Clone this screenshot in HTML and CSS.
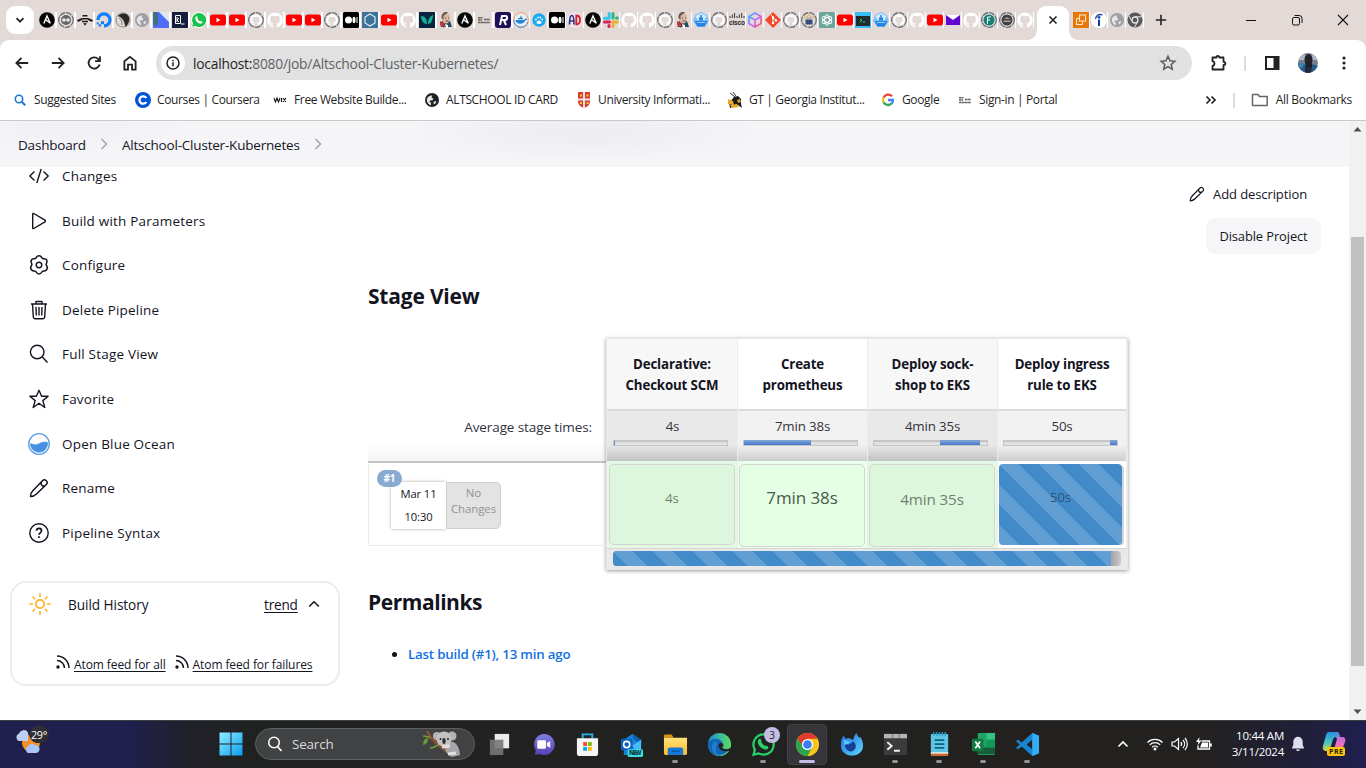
FILE: index.html
```html
<!DOCTYPE html>
<html lang="en">
<head>
<meta charset="utf-8">
<title>Altschool-Cluster-Kubernetes [Jenkins]</title>
<link rel="stylesheet" href="styles.css">
</head>
<body>
<svg class="defs" width="0" height="0">
  <defs>
    <linearGradient id="gWin" x1="0" y1="0" x2="1" y2="1"><stop offset="0" stop-color="#8ff0ff"/><stop offset="1" stop-color="#0a9bf0"/></linearGradient>
    <linearGradient id="gCube" x1="0" y1="0" x2="1" y2="1"><stop offset="0" stop-color="#19c3ff"/><stop offset=".5" stop-color="#c46bff"/><stop offset="1" stop-color="#ff5a5a"/></linearGradient>
    <linearGradient id="gChat" x1="0" y1="0" x2="0" y2="1"><stop offset="0" stop-color="#7d7fe8"/><stop offset="1" stop-color="#5b3fb0"/></linearGradient>
    <linearGradient id="gEdge" x1="0" y1="0" x2="1" y2="0"><stop offset="0" stop-color="#1b8fdc"/><stop offset="1" stop-color="#5bdc60"/></linearGradient>
    <linearGradient id="gFox" x1="0" y1="0" x2="1" y2="1"><stop offset="0" stop-color="#1d6fe0"/><stop offset="1" stop-color="#5fd6ff"/></linearGradient>
    <linearGradient id="gFold" x1="0" y1="0" x2="0" y2="1"><stop offset="0" stop-color="#ffe07a"/><stop offset="1" stop-color="#fbbc2c"/></linearGradient>
    <linearGradient id="gCopL" x1="0" y1="0" x2="0" y2="1"><stop offset="0" stop-color="#2a8fe0"/><stop offset=".5" stop-color="#3fc0c8"/><stop offset="1" stop-color="#c8e04a"/></linearGradient>
    <linearGradient id="gCopR" x1="0" y1="0" x2="0" y2="1"><stop offset="0" stop-color="#9a6cf0"/><stop offset=".6" stop-color="#ee6fc0"/><stop offset="1" stop-color="#ff9a62"/></linearGradient>
  </defs>
  <symbol id="ansible" viewBox="0 0 16 16"><circle cx="8" cy="8" r="7.800" fill="#050505"/><path d="M4.800 11.600 8 4l3.300 7.200-4.500-3.500" fill="none" stroke="#fff" stroke-width="1.400"/></symbol>
  <symbol id="ring" viewBox="0 0 16 16"><circle cx="8" cy="8" r="7.300" fill="none" stroke="#6b7078" stroke-width="1.300" stroke-dasharray="6 .8"/></symbol>
  <symbol id="gh" viewBox="0 0 16 16"><path fill="#fff" d="M8 .5C3.700.5.300 4 .300 8.200c0 3.400 2.200 6.200 5.300 7.200.4.100.5-.2.500-.4v-1.400c-2.100.5-2.600-.9-2.600-.9-.4-.9-.9-1.100-.9-1.100-.7-.5.100-.5.100-.5.800.100 1.200.8 1.200.8.700 1.200 1.800.9 2.200.7.100-.5.300-.9.500-1.100-1.700-.2-3.500-.9-3.500-3.800 0-.8.300-1.500.8-2.100-.1-.2-.4-1 .1-2 0 0 .6-.2 2.100.8a7.300 7.300 0 0 1 3.900 0c1.500-1 2.100-.8 2.100-.8.500 1 .2 1.800.1 2 .5.600.8 1.300.8 2.100 0 2.900-1.800 3.600-3.500 3.800.3.200.5.700.5 1.400v2.100c0 .2.100.5.500.4a7.700 7.700 0 0 0 5.300-7.200C15.700 4 12.300.5 8 .5z"/><path fill="#e3dad7" d="M5 4.400c1-.3 5-.3 6 0 1.300 1.500 1.200 5.200-1.700 5.800H6.700C3.800 9.600 3.700 5.900 5 4.400z"/></symbol>
  <symbol id="ghr" viewBox="0 0 16 16"><use href="#gh" x="2" y="2" width="12" height="12"/><use href="#ring" width="16" height="16"/></symbol>
  <symbol id="eyes" viewBox="0 0 16 16"><use href="#ring" width="16" height="16"/><circle cx="8" cy="8" r="5" fill="#666"/><circle cx="6" cy="8" r="1.800" fill="#eee"/><circle cx="10" cy="8" r="1.800" fill="#eee"/></symbol>
  <symbol id="bee" viewBox="0 0 16 16"><path d="M0 8l5-2v2L1 10zM16 8l-5-2v2l4 2zM5.500 3h5v1.500h-5zM5 6h6v1.500H5zM5 8.700h6v1.500H5zM6 11.300h4L8 13.500z" fill="#1c1c1c"/></symbol>
  <symbol id="docean" viewBox="0 0 16 16"><path d="M8 15.500v-3.200A4.400 4.400 0 1 0 3.600 8H.4A7.600 7.600 0 1 1 8 15.500zM4.900 9.300H8v3H4.900zM2.600 12.200h2.300v2.300H2.600zM.7 10.300h1.900v1.900H.7z" fill="#0a80ff"/></symbol>
  <symbol id="bird" viewBox="0 0 16 16"><circle cx="8" cy="8" r="7" fill="none" stroke="#8c8880"/><path d="M3 4c2-3 9-4 11 1 1 4-1 7-3 10-2-2-1-5-3-7-1-2-3-3-5-4z" fill="#2a2827"/><path d="M4 6c2 1 3 3 3 7" stroke="#777" fill="none"/></symbol>
  <symbol id="globe" viewBox="0 0 16 16"><circle cx="8" cy="8" r="7" fill="currentColor"/><path d="M2.800 7.500c.5-3 3-4.200 5.500-4l-.8 2 2 1.200-1 1.600-2.200.2-1 1.500 1.700.6v2.600c-2.500-.5-4.300-2.700-4.200-5.700zM9.500 9.800l2.700-.8-.5 2.200-1.900 1.300z" fill="#e9e5e4"/></symbol>
  <symbol id="tri" viewBox="0 0 16 16"><path d="M0 0h16v16H0z" fill="#506dff"/><path d="M0 0h16v10L6 0z" fill="#dfe9ee"/><path d="M0 0h4l3 8-4 7-3-4z" fill="#3d7080"/><path d="M5 2l11 11H5z" fill="#4f6dfa"/></symbol>
  <symbol id="kl" viewBox="0 0 16 16"><path d="M0 0h16v16H0z" fill="#161d3d"/><path d="M3.500 3.500h5v8h-5zM5 5v5M5 8l2-2M5 8l2 2M9 12h3.500" fill="none" stroke="#fff"/></symbol>
  <symbol id="wa" viewBox="0 0 16 16"><path d="M8 0a8 8 0 0 0-6.900 12L.2 15.800 4 14.900A8 8 0 1 0 8 0z" fill="#fff"/><path d="M8 1a7 7 0 0 0-6 10.500l-.8 3.200 3.300-.8A7 7 0 1 0 8 1z" fill="#18c24c"/><path d="M5.500 4.300c1-.4 1.200 1.400 1 2.100.4 1.300 1.500 2.300 2.800 2.900.6-.4 2 0 2.200.8.100 1.300-1.500 2-3 1.500C6 10.800 4.400 8.500 4.300 6.300c0-.8.400-1.600 1.200-2z" fill="#fff"/></symbol>
  <symbol id="yt" viewBox="0 0 16 16"><rect y="2.500" width="16" height="11" rx="2.800" fill="#f00"/><path d="M6.500 5.700v4.600L10.500 8z" fill="#fff"/></symbol>
  <symbol id="medium" viewBox="0 0 16 16"><rect width="16" height="16" rx="1.500" fill="#000"/><circle cx="5.500" cy="8" r="3.500" fill="#fff"/><ellipse cx="11" cy="8" rx="1.500" ry="3.200" fill="#fff"/><path d="M14 5v6" stroke="#fff"/></symbol>
  <symbol id="hex" viewBox="0 0 16 16"><path d="M0 0h16v16H0z" fill="#3e7396"/><path d="M8 2l5 3v6l-5 3-5-3V5z" fill="none" stroke="#d9eefb" stroke-width="1.200"/></symbol>
  <symbol id="leaf" viewBox="0 0 16 16"><path d="M0 0h16v16H0z" fill="#0a2440"/><path d="M2 4c4 0 6 3 6 8-4 0-6-4-6-8zM14 3c0 5-2 9-5 9 0-5 2-8 5-9z" fill="#12b39c"/></symbol>
  <symbol id="jenk" viewBox="0 0 16 16"><path d="M2.500 15l1.500-6h8l2 6z" fill="#2f4a5c"/><ellipse cx="8" cy="6" rx="4.200" ry="5.500" fill="#dbb9a4"/><path d="M3.500 6C3 1 7-1 10 .5L8 2 5.500 4v4z" fill="#6a5a52"/><path d="M2 9l4 2v5l-4-3z" fill="#c23a36"/><path d="M7 12l3 1v3H8z" fill="#fff"/><path d="M7 6h1m2 0h1M7.500 9h3" stroke="#6b4a3e"/></symbol>
  <symbol id="alt" viewBox="0 0 16 16"><path d="M2 5.700h4.500M2 8h4M2 10.500h12M8 7.500h6" stroke="#66605e" stroke-width="1.400" stroke-dasharray="2.500 .3"/></symbol>
  <symbol id="rr" viewBox="0 0 16 16"><rect width="16" height="16" rx="3" fill="#1d1056"/><path d="M5 13L7 4h3.500c2.500 0 2 4-.6 4H6.500M8.800 8l2.200 5" stroke="#fff" stroke-width="2" fill="none"/></symbol>
  <symbol id="docker" viewBox="0 0 16 16"><circle cx="8" cy="8" r="7.300" fill="#e9eef1" stroke="#f39b62"/><path d="M.7 8A7.300 7.300 0 0 0 15 10" stroke="#3b8fe2" fill="none"/><path d="M2.500 8h8.500c.8 0 .8-1.600 1.600-1.600s.9.700 1.700.7c-.8 1.600-1.600 1.300-2.400 1.600-1 4-9 4.300-9.400-.7zM5 6h5v1.300H5zM7 4.500h2v1.200H7z" fill="#1f86d6"/></symbol>
  <symbol id="paw" viewBox="0 0 16 16"><circle cx="8" cy="8" r="6.700" fill="#18a8f5"/><path d="M5.500 11c0-3.500 5-3.500 5 0-1 1.200-4 1.200-5 0z" fill="#fff"/><circle cx="5" cy="7.500" r=".9" fill="#fff"/><circle cx="7" cy="5.500" r=".9" fill="#fff"/><circle cx="9.300" cy="5.500" r=".9" fill="#fff"/><circle cx="11.200" cy="7.500" r=".9" fill="#fff"/></symbol>
  <symbol id="ad" viewBox="0 0 16 16"><circle cx="8" cy="8" r="7.700" fill="#f1e6ee"/><path d="M2.500 12.500c0-5 .8-9 2.500-9s2 4 2 9M3 9h4" stroke="#27348f" stroke-width="1.700" fill="none"/><path d="M9.300 3.500v9c5 0 5-9 0-9z" fill="none" stroke="#d8262f" stroke-width="1.900"/></symbol>
  <symbol id="slack" viewBox="0 0 16 16"><path d="M6.200 1.500v4.800" stroke="#36c5f0" stroke-width="3" stroke-linecap="round"/><path d="M1.500 6.300h3" stroke="#36c5f0" stroke-width="3" stroke-linecap="round"/><path d="M10 1.500v4.500M14.500 6h-1" stroke="#2eb67d" stroke-width="3" stroke-linecap="round"/><path d="M1.500 10h5M6 14.500v-1" stroke="#e01e5a" stroke-width="3" stroke-linecap="round"/><path d="M10 14.500V10h4.500" stroke="#ecb22e" stroke-width="3" stroke-linecap="round" fill="none"/></symbol>
  <symbol id="ship" viewBox="0 0 16 16"><path d="M8 0l6 3 1.800 6-4 6H4.200L.2 9 2 3z" fill="#7cc0f5"/><path d="M2.500 4L8 1.200 13.500 4l-2 4h-7z" fill="#d4ecfd"/><path d="M1.500 9h13l-3 5.500h-7zM6 5.500h4v3H6zM7.300 3h1.500v3H7.300z" fill="#2583e6"/><path d="M4 10.500h8" stroke="#8fd0ff"/></symbol>
  <symbol id="cube" viewBox="0 0 16 16"><path d="M8 1l6 3.500v7L8 15l-6-3.500v-7zM2 4.500L8 8l6-3.500M8 8v7" fill="none" stroke="url(#gCube)" stroke-width="1.700"/></symbol>
  <symbol id="git" viewBox="0 0 16 16"><path d="M8 0l8 8-8 8-8-8z" fill="#f0472b"/><path d="M6 3l2 2v6M8 6l3 2.500" stroke="#fff" fill="none"/><circle cx="8" cy="11" r="1.200" fill="#fff"/><circle cx="11" cy="8.500" r="1.200" fill="#fff"/><circle cx="8" cy="5.500" r="1.200" fill="#fff"/></symbol>
  <symbol id="lock" viewBox="0 0 16 16"><use href="#ring" width="16" height="16"/><path d="M3 6l5-3 5 3" stroke="#eda637" stroke-width="1.500" stroke-dasharray="1.500 1" fill="none"/><rect x="4.500" y="7.500" width="7" height="5" fill="#344c79"/><path d="M6 7.500V6h4v1.500" stroke="#8795ad" fill="none"/></symbol>
  <symbol id="gpt" viewBox="0 0 16 16"><rect width="16" height="16" rx="1.500" fill="#6ba799"/><g fill="none" stroke="#fff" stroke-width=".9"><ellipse cx="8" cy="8" rx="2.300" ry="5.300"/><ellipse cx="8" cy="8" rx="2.300" ry="5.300" transform="rotate(60 8 8)"/><ellipse cx="8" cy="8" rx="2.300" ry="5.300" transform="rotate(120 8 8)"/></g></symbol>
  <symbol id="term" viewBox="0 0 16 16"><path d="M0 0h16v16H0z" fill="#37bdf4"/><path d="M1 4h14v10H1z" fill="#222c30"/><path d="M5 7l2 1.500L5 10M8 10h2" stroke="#35df75" fill="none"/></symbol>
  <symbol id="mail" viewBox="0 0 16 16"><path d="M1 3h14v10H1z" fill="#5f06cf"/><path d="M1 3h14L8 8z" fill="#fff"/></symbol>
  <symbol id="fring" viewBox="0 0 16 16"><use href="#ring" width="16" height="16"/><circle cx="8" cy="8" r="5.500" fill="#168077"/><path d="M6.500 12V5H10M6.500 8H9" stroke="#fff" fill="none"/></symbol>
  <symbol id="dring" viewBox="0 0 16 16"><use href="#ring" width="16" height="16"/><circle cx="8" cy="8" r="5.500" fill="#3e4146"/><path d="M4.500 7L8 5.300 11.500 7zM4.500 8.500h7V10h-7z" fill="#b9a18d"/></symbol>
  <symbol id="aws" viewBox="0 0 16 16"><path d="M0 0h16v16H0z" fill="#e87909"/><path d="M6.500 3h6v6h-6zM3.500 6.500v6h6M3.500 6.500h3M9.500 9v3.500" fill="none" stroke="#ffe7cf" stroke-width="1.100"/></symbol>
  <symbol id="indeed" viewBox="0 0 16 16"><circle cx="8" cy="8" r="8" fill="#fff"/><circle cx="8" cy="5.300" r="1.400" fill="#1146b5"/><path d="M8 7.500V14" stroke="#123f9f" stroke-width="2"/><path d="M4.500 7c.5-3.500 3.500-5.500 7-4" stroke="#123f9f" stroke-width="1.300" fill="none"/></symbol>
  <symbol id="chromeg" viewBox="0 0 16 16"><circle cx="8" cy="8" r="7.500" fill="#55585c"/><circle cx="8" cy="8" r="3" fill="#55585c" stroke="#e9e5e4" stroke-width="1.300"/><path d="M8 4.800h7M5.200 9.500L2 4M10.800 9.500l-3.500 6" stroke="#e9e5e4"/></symbol>
  <symbol id="pencil" viewBox="0 0 20 20"><path d="M1.500 18.500c0-2.500 1-4.500 2.500-6L13.500 2.700a2.600 2.600 0 0 1 3.800 3.800L7.500 16c-1.500 1.500-3.500 2.500-6 2.500zM12.800 3.400a2.600 2.600 0 0 0 3.800 3.800" fill="none" stroke="currentColor" stroke-width="1.500" stroke-linejoin="round"/></symbol>
  <symbol id="rss" viewBox="0 0 14 14"><circle cx="2" cy="12" r="1.700" fill="currentColor"/><path d="M1 5.500A7.500 7.500 0 0 1 8.500 13M1 1a12 12 0 0 1 12 12" fill="none" stroke="currentColor" stroke-width="1.500"/></symbol>
</svg>

<header class="browser">
  <div class="tabstrip">
    <button class="tabsearch"><svg width="10" height="10" viewBox="0 0 10 10"><path d="M1.500 3.200L5 6.700l3.500-3.500" fill="none" stroke="#222" stroke-width="1.700"/></svg></button>
    <div class="tabs wide">
      <svg><use href="#ansible"/></svg><svg><use href="#eyes"/></svg><svg><use href="#bee"/></svg><svg><use href="#docean"/></svg><svg><use href="#bird"/></svg><svg class="grey"><use href="#globe"/></svg><svg><use href="#tri"/></svg><svg><use href="#kl"/></svg><svg><use href="#wa"/></svg><svg><use href="#yt"/></svg><svg><use href="#yt"/></svg><svg><use href="#ghr"/></svg><svg><use href="#gh"/></svg><svg><use href="#yt"/></svg><svg><use href="#yt"/></svg><svg><use href="#ghr"/></svg><svg><use href="#medium"/></svg><svg><use href="#hex"/></svg><svg><use href="#yt"/></svg><svg><use href="#gh"/></svg><svg><use href="#leaf"/></svg><svg><use href="#jenk"/></svg><svg><use href="#ansible"/></svg><svg><use href="#alt"/></svg><svg><use href="#rr"/></svg>
    </div>
    <div class="tabs">
      <svg><use href="#docker"/></svg><svg><use href="#paw"/></svg><svg><use href="#medium"/></svg><svg><use href="#ad"/></svg><svg><use href="#ansible"/></svg><svg><use href="#slack"/></svg><svg><use href="#gh"/></svg><svg><use href="#gh"/></svg><svg><use href="#ghr"/></svg><svg><use href="#jenk"/></svg><svg><use href="#ship"/></svg><svg><use href="#ghr"/></svg><svg viewBox="0 0 16 16"><path d="M1 4v2M3.300 2.500V6M5.600 1v5M8 4v2M10.300 2.500V6M12.700 1v5M15 4v2" stroke="#333"/><text x="0" y="12.500" font-family="Liberation Sans" font-weight="700" font-size="6.500" textLength="16" fill="#222">cisco</text></svg><svg><use href="#cube"/></svg><svg><use href="#git"/></svg><svg><use href="#ghr"/></svg><svg><use href="#lock"/></svg><svg><use href="#gpt"/></svg><svg><use href="#yt"/></svg><svg><use href="#term"/></svg><svg><use href="#ship"/></svg><svg><use href="#ghr"/></svg><svg><use href="#gh"/></svg><svg><use href="#yt"/></svg><svg><use href="#mail"/></svg><svg><use href="#gh"/></svg><svg><use href="#fring"/></svg><svg><use href="#dring"/></svg><svg><use href="#gh"/></svg>
    </div>
    <div class="tab-active"><svg width="10" height="10" viewBox="0 0 10 10"><path d="M1.500 1.500l7 7m0-7l-7 7" stroke="#222" stroke-width="1.600"/></svg></div>
    <div class="tabs last"><svg><use href="#aws"/></svg><svg><use href="#indeed"/></svg><svg class="grey"><use href="#globe"/></svg><svg><use href="#chromeg"/></svg></div>
    <svg class="plus" width="12" height="12" viewBox="0 0 12 12"><path d="M6 .8v10.400M.8 6h10.400" stroke="#222" stroke-width="1.600"/></svg>
    <div class="winbtns">
      <svg width="12" height="12" viewBox="0 0 12 12"><path d="M1 6.500h10" stroke="#111"/></svg>
      <svg width="12" height="12" viewBox="0 0 12 12"><path d="M3.500 1.500H8a3 3 0 0 1 3 3V9" fill="none" stroke="#111"/><rect x="1.500" y="3.500" width="7" height="7.500" rx="1.500" fill="none" stroke="#111"/></svg>
      <svg width="12" height="12" viewBox="0 0 12 12"><path d="M1 1l10 10M11 1L1 11" stroke="#111" stroke-width="1.100"/></svg>
    </div>
  </div>
  <div class="toolbar">
    <div class="nav">
      <svg viewBox="0 0 16 16"><path d="M13.500 8H3M7.500 3.500L3 8l4.500 4.500" /></svg>
      <svg viewBox="0 0 16 16"><path d="M2.500 8H13M8.500 3.500L13 8l-4.500 4.500"/></svg>
      <svg viewBox="0 0 16 16"><path d="M13 9.300A5 5 0 1 1 11.800 4.500l1.500 1.500M13.300 2v4.300H9"/></svg>
      <svg viewBox="0 0 16 16"><path d="M3 6.500L8 2.500l5 4v7.300H9.800V9.500H6.200v4.300H3z"/></svg>
    </div>
    <div class="omnibox">
      <span class="info"><svg width="14" height="14" viewBox="0 0 14 14"><circle cx="7" cy="7" r="6" fill="none" stroke="#222" stroke-width="1.500"/><path d="M7 6.300v3.900M7 3.700v1.500" stroke="#222" stroke-width="1.500"/></svg></span>
      <span class="url"><b>localhost:</b>8080/job/Altschool-Cluster-Kubernetes/</span>
      <svg class="fav" width="18" height="18" viewBox="0 0 18 18"><path d="M9 2.200l2 4.500 4.900.5-3.700 3.200 1.100 4.800L9 12.700l-4.300 2.500 1.100-4.800-3.700-3.200 4.900-.5z" fill="none" stroke="#5c5c5c" stroke-width="1.500"/></svg>
    </div>
    <svg class="puzzle" width="20" height="20" viewBox="0 0 20 20"><path d="M3.500 4.500h4c0-2.300 2.800-2.300 2.800 0H14.500v4.300c2.500 0 2.500 3.200 0 3.200v4.500h-11v-3.500c2.600-.5 2.600-4.300 0-4.800z" fill="none" stroke="#222" stroke-width="1.800" stroke-linejoin="round"/></svg>
    <i class="vsep"></i>
    <svg class="panel" width="16" height="16" viewBox="0 0 16 16"><rect x="2" y="2" width="12.500" height="12" fill="none" stroke="#222" stroke-width="2"/><path d="M9.500 2h5v12h-5z" fill="#222"/></svg>
    <svg class="avatar" width="20" height="20" viewBox="0 0 20 20"><defs><clipPath id="av"><circle cx="10" cy="10" r="10"/></clipPath></defs><g clip-path="url(#av)"><path d="M0 0h20v20H0z" fill="#777f91"/><path d="M0 2h20v5H0z" fill="#b4b7c4"/><path d="M0 10l6 1 3 3 5-3 6 2v7H0z" fill="#245b86"/><path d="M2 9l4 2-2 4-4-1z" fill="#3f86b5"/><path d="M7 9h7v6H8z" fill="#1a2030"/><ellipse cx="10.500" cy="6.500" rx="4" ry="5.500" fill="#23232c"/><path d="M7 13l3 3 4-3-1 7H7z" fill="#23283b"/></g></svg>
    <svg class="dots" width="4" height="16" viewBox="0 0 4 16"><g fill="#222"><circle cx="2" cy="3" r="1.600"/><circle cx="2" cy="8" r="1.600"/><circle cx="2" cy="13" r="1.600"/></g></svg>
  </div>
  <div class="bookmarks">
    <div class="bm-list">
      <a><svg viewBox="0 0 16 16"><circle cx="7" cy="7" r="3.700" fill="none" stroke="#1c78cf" stroke-width="1.600"/><path d="M9.700 9.700l3.500 3.500" stroke="#1c78cf" stroke-width="2"/></svg><span>Suggested Sites</span></a>
      <a><svg viewBox="0 0 16 16"><circle cx="8" cy="8" r="8" fill="#0056d6"/><path d="M11.300 6A3.700 3.700 0 1 0 11.300 10" fill="none" stroke="#fff" stroke-width="2.300"/></svg><span>Courses | Coursera</span></a>
      <a><svg viewBox="0 0 16 16"><path d="M2 6l1.500 4L5 6l1.500 4L8 6M9.500 6v4M11 6l3 4M14 6l-3 4" fill="none" stroke="#111" stroke-width="1.100"/></svg><span>Free Website Builde...</span></a>
      <a class="dark"><svg viewBox="0 0 16 16"><use href="#globe"/></svg><span>ALTSCHOOL ID CARD</span></a>
      <a><svg viewBox="0 0 16 16"><path d="M2 0h12v9c0 4-3 6-6 7-3-1-6-3-6-7z" fill="#da3d32"/><path d="M8 0v16M2 7.500h12" stroke="#e8e3e1" stroke-width="2"/><path d="M4 2.500h2v2H4zM10.500 2.500h2v2h-2zM4 10h2v2H4zM10.500 10h2v2h-2z" fill="#ffc629"/></svg><span>University Informati...</span></a>
      <a><svg viewBox="0 0 16 16"><path d="M3 1l5 4M6 0l3 4" stroke="#333" fill="none"/><path d="M7 5l4-1 3 3v5l1 4-4-3-8 3-1-5z" fill="#1c1b18"/><path d="M1 7l5 2 1 4-6-1zM3 13l7-1 2 3-7 1z" fill="#e9a928"/><path d="M10 8l3-1 1 3-3 1z" fill="#d9a032"/></svg><span>GT | Georgia Institut...</span></a>
      <a><svg viewBox="0 0 16 16"><g fill="none" stroke-width="2.300"><path d="M12 4.300A5 5 0 0 0 3.600 5.600" stroke="#ea4335"/><path d="M3.600 5.600a5 5 0 0 0 0 4.800" stroke="#fbbc05"/><path d="M3.600 10.400A5 5 0 0 0 11.300 11.700" stroke="#34a853"/><path d="M11.300 11.700A5 5 0 0 0 13 8H8" stroke="#4285f4"/></g></svg><span>Google</span></a>
      <a><svg viewBox="0 0 16 16"><use href="#alt"/></svg><span>Sign-in | Portal</span></a>
    </div>
    <svg class="more" width="12" height="10" viewBox="0 0 12 10"><path d="M1.500 1.500L5 5 1.500 8.500M6.500 1.500L10 5 6.500 8.500" fill="none" stroke="#222" stroke-width="1.700"/></svg>
    <i class="vsep"></i>
    <svg class="folder" width="18" height="14" viewBox="0 0 18 14"><path d="M1.500 1.500H7l1.500 2h7.700v9H1.500z" fill="none" stroke="#666" stroke-width="1.500" stroke-linejoin="round"/></svg>
    <span class="all">All Bookmarks</span>
  </div>
</header>

<div class="viewport">
  <div class="page">
    <nav class="crumbs">
      <span class="c1">Dashboard</span>
      <svg width="8" height="12" viewBox="0 0 8 12"><path d="M1.500 1l5 5-5 5" fill="none" stroke="#9a9aae" stroke-width="1.300"/></svg>
      <span class="c2">Altschool-Cluster-Kubernetes</span>
      <svg width="8" height="12" viewBox="0 0 8 12"><path d="M1.500 1l5 5-5 5" fill="none" stroke="#9a9aae" stroke-width="1.300"/></svg>
    </nav>
    <div class="columns">
      <aside class="side">
        <a><svg viewBox="0 0 20 20"><path d="M5.500 5.500L.8 10l4.700 4.500M14.500 5.500l4.700 4.500-4.700 4.500M12.200 3L7.800 17"/></svg><span>Changes</span></a>
        <a><svg viewBox="0 0 20 20"><path d="M3.700 3v14c0 .5.500.8 1 .5L16 10.800c.6-.4.600-1.200 0-1.600L4.700 2.500c-.5-.3-1 0-1 .5z"/></svg><span>Build with Parameters</span></a>
        <a><svg viewBox="0 0 20 20"><path d="M7.600 2.200C8.600.3 11.400.3 12.400 2.200c.4.900 1.200 1.300 2.100 1.200 2.100-.3 3.500 2.100 2.400 3.800-.6.800-.6 1.600-.1 2.400l.3.400c1.300 2.200-.3 4.700-2.600 4.500-.9-.1-1.700.400-2.100 1.200-1 2-3.800 2-4.800 0-.4-.8-1.200-1.300-2.100-1.200-2.300.2-3.900-2.300-2.600-4.500l.3-.4c.5-.8.500-1.600-.1-2.400C2 5.500 3.400 3.100 5.500 3.400c.9.100 1.700-.3 2.100-1.200z" transform="translate(-1 0) scale(1.100)"/><circle cx="10" cy="10" r="2.800"/></svg><span>Configure</span></a>
        <a><svg viewBox="0 0 20 20"><path d="M2 4h16M7 4V1.500h6V4M3.500 4l.8 13c.1 1.100.8 1.700 1.700 1.700h8c.9 0 1.600-.6 1.700-1.700l.8-13M7 7l.3 8.500M10 7v8.500M13 7l-.3 8.500"/></svg><span>Delete Pipeline</span></a>
        <a><svg viewBox="0 0 20 20"><circle cx="8.200" cy="8" r="6.800"/><path d="M13.300 13l5.200 5.500"/></svg><span>Full Stage View</span></a>
        <a><svg viewBox="0 0 20 20"><path d="M10 1.300l2.600 6h6.500l-5.300 4.300 2 6.900-5.800-4.200-5.800 4.200 2-6.900L.9 7.300h6.500z"/></svg><span>Favorite</span></a>
        <a><svg class="ocean" viewBox="0 0 22 22"><circle cx="11" cy="11" r="10.300" fill="#fff" stroke="#5a9fe8" stroke-width="1.300"/><path d="M2.300 10.500c2.500.8 5 2 8 .6 3-1.700 5.500-2.800 9.400-1.600C20 15 16 19.300 11 19.300c-4.800 0-8.600-4-8.700-8.800z" fill="#4a90e2" stroke="#4a90e2" stroke-width=".6"/></svg><span>Open Blue Ocean</span></a>
        <a><svg viewBox="0 0 20 20"><use href="#pencil"/></svg><span>Rename</span></a>
        <a><svg viewBox="0 0 20 20"><circle cx="10" cy="10" r="9.200"/><path d="M7.500 7.800c.2-3.300 5-3 5 0 0 2-2.500 2-2.500 4M10 13.300v1.700" stroke-width="1.700"/></svg><span>Pipeline Syntax</span></a>
        <section class="history">
          <div class="h-head">
            <svg class="sun" width="22" height="22" viewBox="0 0 22 22"><g fill="none" stroke="#fbb429" stroke-width="1.700" stroke-linecap="round"><circle cx="11" cy="11" r="4.200"/><path d="M11 1v2.500M11 18.500V21M1 11h2.500M18.500 11H21M4 4l1.600 1.600M16.400 16.400L18 18M18 4l-1.600 1.600M4 18l1.600-1.600"/></g></svg>
            <span class="bh">Build History</span><u>trend</u>
            <svg class="chev" width="12" height="8" viewBox="0 0 12 8"><path d="M1.200 6.500L6 1.700l4.800 4.800" fill="none" stroke="#14141f" stroke-width="1.500"/></svg>
          </div>
          <div class="feeds">
            <svg width="14" height="14"><use href="#rss"/></svg><u>Atom feed for all</u>
            <svg width="14" height="14"><use href="#rss"/></svg><u>Atom feed for failures</u>
          </div>
        </section>
      </aside>
      <main class="main">
        <div class="actions">
          <a class="adddesc"><svg width="16" height="16"><use href="#pencil"/></svg><span>Add description</span></a>
          <button class="disable">Disable Project</button>
        </div>
        <h2 class="sv">Stage View</h2>
        <div class="stage">
          <div class="left">
            <div class="avg-label">Average stage times:</div>
            <div class="job">
              <span class="badge">#1</span>
              <div class="date"><span>Mar 11</span><span>10:30</span></div>
              <div class="nochg">No<br>Changes</div>
            </div>
          </div>
          <div class="table">
            <div class="col odd first"><div class="th">Declarative:<br>Checkout SCM</div><div class="td-avg"><span>4s</span><div class="meter m1"><i></i></div></div><div class="cell"><div class="ok s1">4s</div></div></div>
            <div class="col"><div class="th">Create<br>prometheus</div><div class="td-avg"><span>7min 38s</span><div class="meter m2"><i></i></div></div><div class="cell"><div class="ok s2">7min 38s</div></div></div>
            <div class="col odd"><div class="th">Deploy sock-<br>shop to EKS</div><div class="td-avg"><span>4min 35s</span><div class="meter m3"><i></i></div></div><div class="cell"><div class="ok s3">4min 35s</div></div></div>
            <div class="col"><div class="th">Deploy ingress<br>rule to EKS</div><div class="td-avg"><span>50s</span><div class="meter m4"><i></i></div></div><div class="cell run"><div class="ok striped">50s</div></div></div>
            <div class="progress"><div class="track"><div class="fill"></div></div></div>
          </div>
        </div>
        <h2 class="pl">Permalinks</h2>
        <ul class="links"><li><a>Last build (#1), 13 min ago</a></li></ul>
      </main>
    </div>
  </div>
  <div class="scrollbar"><svg width="17" height="17" viewBox="0 0 17 17"><path d="M4.500 10.500h8l-4-4.500z" fill="#505050"/></svg><div class="thumb"></div><svg width="17" height="17" viewBox="0 0 17 17"><path d="M4.500 6.500h8l-4 4.500z" fill="#505050"/></svg></div>
</div>

<footer class="taskbar">
  <div class="weather"><svg width="36" height="34" viewBox="0 0 36 34"><circle cx="15" cy="18" r="9" fill="#f58f22"/><path d="M3 16a4 4 0 0 1 0-7.500 5 5 0 0 1 9-1V16z" fill="#bcd0f5"/><path d="M12 28a4 4 0 0 1 0-7 4.500 4.500 0 0 1 7-1 4 4 0 0 1 1 8z" fill="#a9c5f6"/></svg><span>29°</span></div>
  <div class="tb start"><svg width="24" height="24" viewBox="0 0 24 24"><path d="M.5.500h11v11H.5zM12.500.500h11v11h-11zM.5 12.500h11v11H.5zM12.500 12.500h11v11h-11z" fill="url(#gWin)"/></svg></div>
  <div class="search"><svg width="16" height="16" viewBox="0 0 16 16"><circle cx="7" cy="6.500" r="5.300" fill="none" stroke="#fff" stroke-width="1.500"/><path d="M10.500 10.500l4 4.500" stroke="#fff" stroke-width="1.700"/></svg><span>Search</span>
    <svg class="koala" width="42" height="28" viewBox="0 0 42 28"><path d="M5 1c4 9 14 16 25 25" stroke="#8d5236" stroke-width="2.500" fill="none"/><path d="M13 12L20 3M10 9L2 6" stroke="#8d5236" stroke-width="1.500"/><path d="M2 14c0-4 3-5 3-5s1 4-3 5zM8 18c4 0 7-2 9-4M1 6l7 1" fill="#6a9b35" stroke="#6a9b35" stroke-width="1.500"/><path d="M24 12c8-2 13 2 14 13l-8 2c-7-4-8-8-6-15z" fill="#a7a5a8"/><circle cx="15" cy="6" r="4" fill="#b6b2b5"/><circle cx="30" cy="6" r="4.500" fill="#b6b2b5"/><circle cx="22" cy="9" r="7.500" fill="#c5c2c4"/><ellipse cx="22" cy="11" rx="1.700" ry="3" fill="#333"/><circle cx="18.500" cy="9" r="1" fill="#222"/><circle cx="26" cy="9" r="1" fill="#222"/><path d="M20 17l8-1M26 24l8-1" stroke="#e3dfe1" stroke-width="3"/></svg></div>
  <div class="apps">
    <div class="tb"><svg viewBox="0 0 26 26"><path d="M8 2h15v15H8z" fill="#ececec"/><path d="M3 8h14v16H3z" fill="#777" opacity=".9"/></svg></div>
    <div class="tb"><svg viewBox="0 0 26 26"><path d="M13 2a11 11 0 1 1-4 21l-5 1 1-5A11 11 0 0 1 13 2z" fill="url(#gChat)"/><rect x="6.500" y="8.500" width="9" height="9" rx="1.500" fill="#fff"/><path d="M16.500 11.500l3.500-2v7l-3.500-2z" fill="#fff"/></svg></div>
    <div class="tb"><svg viewBox="0 0 26 26"><path d="M8 7V2.500h10V7" fill="none" stroke="#29b3ef" stroke-width="2"/><path d="M2 6.500h22V22c0 2-1 3-3 3H5c-2 0-3-1-3-3z" fill="#f5f5f5"/><path d="M8.500 10.500h4v4h-4z" fill="#f25022"/><path d="M13.500 10.500h4v4h-4z" fill="#7fba00"/><path d="M8.500 15.500h4v4h-4z" fill="#00a4ef"/><path d="M13.500 15.500h4v4h-4z" fill="#ffb900"/></svg></div>
    <div class="tb"><svg viewBox="0 0 26 26"><path d="M5 8l9-6 9 6v12l-4 4H5z" fill="#1685df"/><path d="M14 2l9 6v5l-8-6z" fill="#0f5fb0"/><path d="M14 14l9-6v12l-4 3z" fill="#49b9f7"/><rect x="2" y="7" width="12" height="12" rx="1.500" fill="#0c62be"/><circle cx="8" cy="13" r="3.200" fill="none" stroke="#fff" stroke-width="1.700"/><rect x="9" y="18" width="16" height="8" rx="1.500" fill="#3fe0dc"/><text x="10.500" y="24.300" font-family="Open Sans" font-weight="800" font-size="6.300" textLength="13" fill="#083c50">NEW</text></svg></div>
    <div class="tb on"><svg viewBox="0 0 26 26"><path d="M1 4c0-1 1-1.500 2-1.500h6L11 6H1z" fill="#d9960b"/><path d="M1 6h24v16c0 1-1 2-2 2H3c-1 0-2-1-2-2z" fill="url(#gFold)"/><path d="M5 18c0-1 1-2 2-2h12c1 0 2 1 2 2v6H5z" fill="#1678d4"/><path d="M9 20h8" stroke="#0c569f" stroke-width="1.500"/></svg></div>
    <div class="tb"><svg viewBox="0 0 26 26"><circle cx="13" cy="13" r="12" fill="url(#gEdge)"/><path d="M1 12C4 5 15 6 16 12c0 2-1 3-1 4 2 3 6 2 9 1-6 10-23 10-23-5z" fill="#1264b8"/><path d="M12 14c0-4 6-3 5 0-.5 1.500-1.500 1.700-1 2.500 2 2.500 7 1.500 9-.5v3c-5 2.500-13 1-13-5z" fill="#202322"/><path d="M8 9c-7 8 0 16 6 16-5-3-7-7-3-13z" fill="#1d80cf"/></svg></div>
    <div class="tb on wa"><svg viewBox="0 0 26 26"><path d="M13 2.500a10.500 10.500 0 0 0-9 15.800L2.600 23.600 8 22.200A10.500 10.500 0 1 0 13 2.500z" fill="#202322" stroke="#27d366" stroke-width="2.300"/><path d="M9 7c1.500-.6 2 2 1.500 3 .8 2 2.200 3.500 4.300 4.500.8-.8 3.200.2 3.300 1.300 0 2-2.500 3-4.600 2.200C9.600 16.700 7 13 7 10c0-1.500.9-2.600 2-3z" fill="#27d366"/></svg><b>3</b></div>
    <div class="tb on active"><svg viewBox="0 0 26 26"><circle cx="13" cy="13" r="12" fill="#f9c51d"/><path d="M13 13L2.600 7A12 12 0 0 0 13 25l5-9z" fill="#2da44e"/><path d="M2.600 7A12 12 0 0 1 23.400 7H13L9 15z" fill="#e23b2e"/><circle cx="13" cy="13" r="5.800" fill="#fff"/><circle cx="13" cy="13" r="4.500" fill="#3c7df0"/></svg></div>
    <div class="tb"><svg viewBox="0 0 26 26"><path d="M2 14c0-5 1-8 2.500-10l2.500 3c2-1 4-1 5 0 1 1 2 1 3 1 0-2 1-4 3-7 1 2 2 4 3 5l1-1c2 3 3 6 3 9 0 14-23 14-23 0z" fill="url(#gFox)"/><path d="M6 12l4 1 5-3c3 2 4 8-1 10-5 1-8-3-8-8z" fill="#173e92"/><path d="M4.500 8l6.500 1.500-1.500 3-4 1z" fill="#55c4ff"/></svg></div>
    <div class="tb on"><svg viewBox="0 0 26 26"><rect x="1" y="2" width="24" height="22" fill="#3b3b3b"/><path d="M1 2h24v4.500H1z" fill="#b4b4b4"/><path d="M10 2v4.500M17 2v4.500" stroke="#777"/><path d="M4.500 10.500L9 14.500l-4.500 4M11.500 19.500h6" fill="none" stroke="#f2f2f2" stroke-width="2"/></svg></div>
    <div class="tb on"><svg viewBox="0 0 26 26"><rect x="4" y="2" width="18" height="22" rx="1" fill="#5ec5e5"/><path d="M4 22h18v3H4z" fill="#c96a2c"/><path d="M4 21h18v1.500H4z" fill="#eee"/><path d="M7 0v4M10 0v4M13 0v4M16 0v4M19 0v4" stroke="#2b98ca" stroke-width="1.500"/><path d="M8 8.500h10M8 12.500h10M8 16.500h10" stroke="#116184" stroke-width="1.800"/></svg></div>
    <div class="tb on"><svg viewBox="0 0 26 26"><rect x="7" y="1" width="18" height="23" rx="1.500" fill="#21a366"/><path d="M16 1h9v7h-9z" fill="#34c481"/><path d="M7 16h18v7H7z" fill="#185c37"/><path d="M16 8h9v8h-9z" fill="#109a5a"/><rect x="1" y="7" width="12" height="13" rx="1" fill="#107c41"/><path d="M4.500 10l5 7M9.500 10l-5 7" stroke="#fff" stroke-width="1.800"/></svg></div>
    <div class="tb on"><svg viewBox="0 0 26 26"><path d="M18 1l7 3v18l-7 3L7 15l-4 3-2-1.500L5 13 1 9.500 3 8l4 3zM18 8l-6 5 6 5z" fill="#1686d2" fill-rule="evenodd"/><path d="M18 1l7 3v18l-7 3z" fill="#35acf3"/></svg></div>
  </div>
  <div class="tray">
    <svg class="t-chev" width="12" height="8" viewBox="0 0 12 8"><path d="M1.500 6.500L6 2l4.500 4.500" fill="none" stroke="#fff" stroke-width="1.600"/></svg>
    <svg class="t-wifi" width="18" height="14" viewBox="0 0 18 14"><g fill="none" stroke="#fff" stroke-width="1.200"><path d="M1.500 5.500a10.500 10.500 0 0 1 15 0M3.800 7.900a7.200 7.200 0 0 1 10.400 0M6.200 10.200a4 4 0 0 1 5.600 0"/></g><circle cx="9" cy="12" r="1.500" fill="#fff"/></svg>
    <svg class="t-vol" width="18" height="14" viewBox="0 0 18 14"><g fill="none" stroke="#fff" stroke-width="1.200"><path d="M1 5h2.500L7.500 1.500v11L3.500 9H1zM9.800 5a3 3 0 0 1 0 4M12 3a6 6 0 0 1 0 8M14 1a9 9 0 0 1 0 12"/></g></svg>
    <svg class="t-bat" width="18" height="14" viewBox="0 0 18 14"><path d="M6.500 4h8v8H3V8.500" fill="none" stroke="#fff" stroke-width="1.300"/><path d="M7 5.500h6v5H5z" fill="#fff"/><path d="M15 6.500h1.800v3H15zM4.500 0L1 5h2.500L2.500 8.500 6.500 3.500H4z" fill="#fff"/></svg>
    <div class="clock"><span>10:44 AM</span><span>3/11/2024</span></div>
    <svg class="t-bell" width="14" height="16" viewBox="0 0 14 16"><path d="M7 .8a4.700 4.700 0 0 0-4.700 4.700V9L.8 12.500h12.400L11.700 9V5.500A4.700 4.700 0 0 0 7 .8zM5 13.500c.5 2 3.500 2 4 0z" fill="#dfdcf2"/></svg>
    <svg class="t-cop" width="24" height="26" viewBox="0 0 24 26"><path d="M11 1h4c2 0 2.500 2 3 5h2c3 0 4 2 3 5l-3 8c-1 2-2 3-4 3h-5l4-14z" fill="url(#gCopR)"/><path d="M7 1h7c2 0 2.500 2.500 3 5h-3c-2 0-2.700 1.500-3.500 4L8 18c-.7 2-2 2.500-3.500 2C1 20 .3 17.500 1 15L4 4c.6-2 1.500-3 3-3z" fill="url(#gCopL)"/><rect x="5" y="16" width="18" height="9" rx="2" fill="#fdc60a"/><text x="7" y="23.200" font-family="Open Sans" font-weight="700" font-size="7" textLength="14" fill="#26200a">PRE</text></svg>
  </div>
</footer>
</body>
</html>
```

FILE: styles.css
```css
* { box-sizing: border-box; }
body {
  margin: 0; width: 1366px; height: 768px; overflow: hidden;
  display: flex; flex-direction: column;
  font-family: "Open Sans", "Noto Sans", sans-serif; color: #14141f; background: #fff;
}
svg { display: block; flex: none; }
.defs { position: absolute; }
button { font: inherit; border: 0; padding: 0; }
span, u { white-space: nowrap; }

/* Browser frame */
.browser { height: 121px; flex: none; background: #e3dad7; border-bottom: 1px solid #c9c9c9; }
.tabstrip { height: 40px; display: flex; align-items: center; padding-left: 6px; }
.tabsearch { width: 28px; height: 28px; border-radius: 9px; background: #fff; display: flex; align-items: center; justify-content: center; margin-right: 4px; }
.tabs { display: flex; }
.tabs svg {
  width: 18px; height: 16px; padding: 0 1px;
  background: linear-gradient(#fff, #fff) right / 1px 16px no-repeat;
}
.tabs.wide svg { width: 19px; padding: 0 2px 0 1px; background-size: 2px 16px; }
.tabs.wide { margin-right: -1px; }
.grey { color: #9ba0a6; }
.tab-active { width: 32px; height: 34px; align-self: flex-end; background: #fff; border-radius: 9px 9px 0 0; display: flex; align-items: center; justify-content: center; margin: 0 3px; padding-bottom: 6px; position: relative; }
.tab-active::before, .tab-active::after { content: ""; position: absolute; bottom: 0; width: 9px; height: 9px; }
.tab-active::before { left: -9px; background: radial-gradient(circle at 0 0, transparent 8.500px, #fff 9px); }
.tab-active::after { right: -9px; background: radial-gradient(circle at 100% 0, transparent 8.500px, #fff 9px); }
.plus { margin-left: 11px; }
.winbtns { margin-left: auto; display: flex; gap: 34px; padding-right: 17px; }
.toolbar { height: 46px; background: #fff; border-radius: 9px 9px 0 0; display: flex; align-items: center; padding-left: 12px; }
.nav { display: flex; gap: 16px; width: 144px; }
.nav svg { width: 20px; height: 20px; padding: 1px; fill: none; stroke: #222; stroke-width: 1.600; }
.omnibox { width: 1036px; height: 34px; border-radius: 17px; background: #e1e1e1; display: flex; align-items: center; padding: 0 15px 0 5px; }
.info { width: 24px; height: 24px; border-radius: 50%; background: #fff; display: flex; align-items: center; justify-content: center; }
.url { font-size: 13.800px; letter-spacing: -.22px; color: #606266; margin-left: 8px; }
.url b { font-weight: 400; color: #1f1f1f; }
.fav { margin-left: auto; }
.puzzle { margin-left: 17px; }
.vsep { width: 2px; height: 15px; background: #e3dad7; flex: none; }
.puzzle + .vsep { margin-left: 15px; }
.panel { margin-left: 18px; }
.avatar { margin-left: 18px; }
.dots { margin-left: 24px; }
.bookmarks { height: 34px; background: #fff; display: flex; align-items: center; padding: 0 14px 6px 12px; font-size: 12px; letter-spacing: -.36px; color: #1f1f1f; }
.bookmarks span { margin-bottom: 2px; }
.bm-list { width: 1194px; display: grid; grid-template-columns: 123px 137px 152px 152px 151px 153px 77px 1fr; }
.bm-list a { display: flex; align-items: center; gap: 6px; }
.bm-list svg { width: 16px; height: 16px; }
.dark { color: #1f2022; }
.bookmarks .vsep { margin: 0 16px 0 16px; }
.bookmarks .all { margin-left: 7px; letter-spacing: -.28px; }

/* Page */
.viewport { height: 599px; flex: none; display: flex; overflow: hidden; }
.page { flex: 1; height: 599px; overflow: hidden; }
.crumbs {
  height: 46px; position: relative; z-index: 2; display: flex; align-items: center; padding: 2px 0 0 18px; gap: 14px;
  font-size: 13.500px; letter-spacing: -.2px;
  background:
    radial-gradient(ellipse 180px 28px at 585px 12px, #ececf1, rgba(236,236,241,0)),
    radial-gradient(ellipse 120px 26px at 70px 6px, #f0f0f5, rgba(240,240,245,0)),
    #f5f5f8;
}
.crumbs svg { margin-top: -3px; }
.columns { display: flex; }
.side { width: 350px; margin-top: -13.400px; padding-left: 10px; }
.side > a { display: flex; align-items: center; height: 44.620px; padding-left: 19px; gap: 13px; font-size: 13.500px; letter-spacing: .2px; }
.side > a svg { width: 20px; height: 20px; fill: none; stroke: #14141f; stroke-width: 1.400; stroke-linejoin: round; }
.side > a .ocean { width: 22px; height: 22px; margin: 0 -1px; }
.history { width: 330px; height: 105px; margin-top: 26.400px; border: 2px solid #ebebf2; border-radius: 16px; }
.h-head { display: flex; align-items: center; height: 42px; padding-left: 17px; font-size: 13.600px; }
.bh { margin-left: 17px; width: 196px; letter-spacing: -.05px; }
.h-head u { width: 34px; letter-spacing: -.2px; }
u { text-underline-offset: 2px; }
.chev { margin-left: 10px; }
.feeds { display: flex; align-items: center; padding: 31px 0 0 44px; font-size: 12px; letter-spacing: -.1px; }
.feeds svg { margin: -6px 4px 0 0; }
.feeds u + svg { margin-left: 9px; }
.main { width: 999px; padding-left: 18px; }
.actions { height: 87px; display: flex; flex-direction: column; align-items: flex-end; padding: 13px 28px 0 0; font-size: 13px; letter-spacing: -.1px; }
.adddesc { display: flex; align-items: center; gap: 8px; height: 28px; padding-right: 14px; }
.disable { width: 115px; height: 36px; margin-top: 10px; border-radius: 9px; background: #f6f6f9; color: #14141f; font-size: 12.900px; letter-spacing: -.1px; flex: none; }
h2 { margin: 0; font-size: 21px; line-height: 30px; font-weight: 700; letter-spacing: -.2px; }
.sv { margin-top: 27px; }
.stage { display: flex; margin-top: 27px; height: 232px; }
.left { width: 238px; padding-top: 71px; flex: none; }
.avg-label { height: 54px; text-align: right; padding: 8px 14px 0 0; font-size: 13.500px; letter-spacing: -.1px; line-height: 20px; color: #333340; background: linear-gradient(#fff, #fff 65%, #f4f4f4); border-bottom: 2px solid #c4c4c4; }
.job { height: 83px; border: 1px solid #ececec; border-right: 0; border-top: 0; display: flex; padding: 19px 0 0 22px; position: relative; font-size: 11.500px; letter-spacing: -.1px; }
.badge { position: absolute; left: 8px; top: 7px; z-index: 2; width: 25px; height: 17px; border-radius: 9px; background: #87abd1; color: #fff; font-weight: 700; font-size: 10px; line-height: 17px; text-align: center; }
.date { width: 55px; height: 47px; background: #fff; box-shadow: 0 0 3px rgba(0,0,0,.35); display: flex; flex-direction: column; align-items: center; font-size: 11.200px; line-height: 23px; }
.nochg { width: 55px; height: 47px; border-radius: 0 5px 5px 0; border: 1px solid #cfcfcf; background: #e3e3e3; color: #929292; text-align: center; line-height: 16px; padding-top: 2px; }
.table { width: 522px; height: 232px; background: #e9e9e9; box-shadow: 0 1px 4px rgba(0,0,0,.4); border: 1px solid #e8e8e8; display: grid; grid-template-columns: 131px 130px 130px 129px; grid-template-rows: 209px 1fr; }
.col { border-right: 1px solid #ececec; background: #fff; }
.col.odd { background: #f7f7f7; }
.th { height: 71px; padding-top: 15px; font-weight: 700; font-size: 13.300px; letter-spacing: -.15px; line-height: 21px; text-align: center; white-space: nowrap; }
.td-avg { height: 52px; border-top: 2px solid #dcdcdc; padding: 5px 5px 0 5px; text-align: center; font-size: 13.300px; letter-spacing: -.15px; line-height: 20px; background: linear-gradient(#f2f2f2, #f1f1f1 68%, #cdcdcd); color: #333340; margin-top: -1px; }
.odd .td-avg { background: linear-gradient(#e9e9e9, #e8e8e8 68%, #c2c2c2); }
.first .td-avg { padding-left: 6px; }
.meter { width: 115px; height: 6px; margin-top: 4px; border: 1px solid #c6c6c6; background: #e2e2e2; box-shadow: inset 0 1px 1px #c4c4c4; }
.meter i { display: block; height: 5px; margin-top: -1px; background: linear-gradient(#85a9d8, #4478cc); }
.m1 i { width: 1px; }
.m2 i { width: 67px; }
.m3 i { width: 40px; margin-left: 66px; }
.m4 i { width: 7px; margin-left: 106px; }
.cell { height: 87px; padding: 3px 2px 2px 1px; background: #e4f8e3; }
.first .cell { padding: 3px 2px 2px 2px; }
.col:not(.odd) .cell { background: #ecffea; }
.ok { height: 81px; border: 1px solid #d2d6d2; border-radius: 5px; background: #ddf7dc; text-align: center; line-height: 66px; color: #6f7f6f; font-size: 13px; letter-spacing: -.1px; }
.s2 { background: #e4ffe3; font-size: 17px; color: #4b5a4b; height: 83px; }
.s3 { font-size: 15.200px; line-height: 68px; height: 83px; }
.col .cell.run { background: #fff; padding-right: 4px; }
.striped, .fill { background-color: #428bca; background-image: linear-gradient(45deg, rgba(255,255,255,.16) 25%, transparent 25%, transparent 50%, rgba(255,255,255,.16) 50%, rgba(255,255,255,.16) 75%, transparent 75%); background-size: 40px 40px; }
.striped { color: #2d5577; border: 0; border-radius: 4px; box-shadow: 3px 1px 0 -1px #d4d4d8; }
.progress { grid-column: 1 / -1; border-top: 1px solid #d5d5d5; padding: 2px 6px 0 6px; }
.track { height: 15px; border-radius: 4px; overflow: hidden; background: linear-gradient(90deg, #999 97.500%, #c9c9c9); }
.fill { height: 15px; width: 498px; }
.pl { margin-top: 17px; letter-spacing: -.45px; }
.links { margin: 26px 0 0; padding-left: 40px; font-size: 13.300px; letter-spacing: -.2px; line-height: 22px; }
.links a { color: #1070e0; font-weight: 600; }
.scrollbar { width: 17px; background: #f1f1f1; display: flex; flex-direction: column; height: 599px; }
.thumb { width: 13px; height: 429px; margin: 99px 0 37px 2px; background: #c1c1c1; }

/* Taskbar */
.taskbar { height: 48px; flex: none; display: flex; align-items: center; border-top: 1px solid #3b3f42; background: linear-gradient(90deg, #201f4d 0, #201f4d 130px, #202028 190px, #202221 250px, #232120 1200px, #201f3d 1320px, #201f50 1366px); color: #fff; }
.weather { width: 208px; height: 47px; padding: 4px 0 0 16px; position: relative; }
.weather span { position: absolute; left: 20px; top: 5px; width: 38px; height: 17px; font-size: 10.800px; letter-spacing: -.3px; line-height: 17px; background: radial-gradient(ellipse 10px 9px, #302d35 95%, transparent); text-align: center; }
.tb { width: 44px; height: 47px; display: flex; align-items: center; justify-content: center; position: relative; padding-bottom: 1px; }
.start { padding-left: 1px; }
.apps { display: flex; margin-left: 2px; }
.apps svg { width: 25px; height: 25px; }
.search { width: 220px; height: 32px; margin: 0 0 1px 3px; border-radius: 16px; background: #414243; border: 1px solid #5d5e5f; display: flex; align-items: center; padding-left: 11px; font-size: 13.400px; letter-spacing: -.15px; color: #dcdcdc; }
.search span { margin: 0 0 1px 9px; width: 94px; }
.koala { margin-left: 36px; }
.on::after { content: ""; position: absolute; bottom: 5px; left: 19px; width: 6px; height: 3px; border-radius: 2px; background: #929292; }
.active::before { content: ""; position: absolute; inset: 3px 2px; border-radius: 4px; background: #36363a; border: 1px solid #424246; }
.active svg { position: relative; }
.active::after { left: 14px; width: 16px; background: #c4bfe6; }
.wa b { position: absolute; right: 5px; top: 6px; width: 16px; height: 16px; border-radius: 50%; background: #c3bde2; color: #222; font: 400 10px/16px "Open Sans", sans-serif; text-align: center; }
.tray { flex: 1; height: 47px; display: flex; align-items: center; padding: 0 0 2px 68px; }
.t-wifi { margin-left: 17px; }
.t-vol { margin-left: 7px; }
.t-bat { margin-left: 6px; }
.clock { width: 71px; font-size: 11.500px; letter-spacing: -.25px; line-height: 16px; display: flex; flex-direction: column; align-items: flex-end; }
.t-bell { margin-left: 7px; }
.t-cop { margin-left: 17px; }
```
